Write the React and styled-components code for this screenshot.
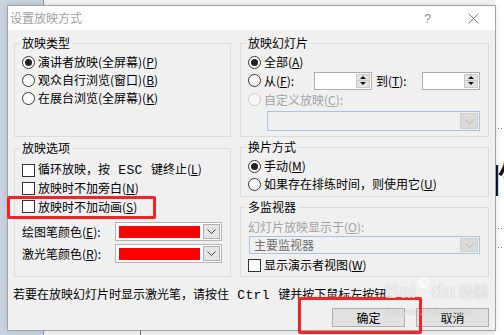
import styled, { createGlobalStyle } from 'styled-components'

const GlobalStyle = createGlobalStyle`
  html, body {
    margin: 0;
    padding: 0;
  }
  body {
    font-family: "Noto Sans CJK SC", "Noto Sans", sans-serif;
    font-size: 12px;
    color: #000;
  }
`

const Chevron = ({ color = '#555' }) => (
  <svg width="9" height="5" viewBox="0 0 9 5">
    <polyline points="0.5,0.5 4.5,4.5 8.5,0.5" fill="none" stroke={color} strokeWidth="1" />
  </svg>
)

const Radio = ({ checked, disabled }) => <RadioMark $checked={checked} $disabled={disabled} />

export default function App() {
  return (
    <>
      <GlobalStyle />
      <Screen>
        <BackGlyph>的</BackGlyph>
        <Dialog>
          <TitleBar>
            <Title>设置放映方式</Title>
            <TitleButtons>
              <HelpMark>?</HelpMark>
              <svg width="11" height="11" viewBox="0 0 11 11">
                <path d="M0.5 0.5 L10.5 10.5 M10.5 0.5 L0.5 10.5" stroke="#777" strokeWidth="1" />
              </svg>
            </TitleButtons>
          </TitleBar>

          <Body>
            <Columns>
              <Column>
                <Group $h={101}>
                  <Legend>放映类型</Legend>
                  <Row>
                    <Radio checked />
                    <Text>演讲者放映(全屏幕)(<u>P</u>)</Text>
                  </Row>
                  <Row>
                    <Radio />
                    <Text>观众自行浏览(窗口)(<u>B</u>)</Text>
                  </Row>
                  <Row>
                    <Radio />
                    <Text>在展台浏览(全屏幕)(<u>K</u>)</Text>
                  </Row>
                </Group>

                <Group $h={136} $pt={6} $gapTop={4}>
                  <Legend>放映选项</Legend>
                  <Row>
                    <CheckMark />
                    <Text>循环放映，按<Mono> ESC </Mono>键终止(<u>L</u>)</Text>
                  </Row>
                  <Row>
                    <CheckMark />
                    <Text>放映时不加旁白(<u>N</u>)</Text>
                  </Row>
                  <Row $h={19}>
                    <CheckMark />
                    <Text>放映时不加动画(<u>S</u>)</Text>
                  </Row>
                  <Row $h={19} $mt={6}>
                    <FieldLabel>绘图笔颜色(<u>E</u>):</FieldLabel>
                    <ColorCombo>
                      <Swatch />
                      <DropButton>
                        <Chevron color="#444" />
                      </DropButton>
                    </ColorCombo>
                  </Row>
                  <Row $h={19} $mt={3}>
                    <FieldLabel>激光笔颜色(<u>R</u>):</FieldLabel>
                    <ColorCombo>
                      <Swatch />
                      <DropButton>
                        <Chevron color="#444" />
                      </DropButton>
                    </ColorCombo>
                  </Row>
                </Group>
              </Column>

              <Column>
                <Group $h={101}>
                  <Legend>放映幻灯片</Legend>
                  <Row>
                    <Radio checked />
                    <Text>全部(<u>A</u>)</Text>
                  </Row>
                  <Row $h={19}>
                    <Lead>
                      <Radio />
                      <Text>从(<u>F</u>):</Text>
                    </Lead>
                    <Spinner>
                      <SpinButtons>
                        <SpinArrow $up />
                        <SpinArrow />
                      </SpinButtons>
                    </Spinner>
                    <ToLabel>到(<u>T</u>):</ToLabel>
                    <Spinner>
                      <SpinButtons>
                        <SpinArrow $up />
                        <SpinArrow />
                      </SpinButtons>
                    </Spinner>
                  </Row>
                  <Row $h={19}>
                    <Radio disabled />
                    <Text $disabled>自定义放映(<u>C</u>):</Text>
                  </Row>
                  <SelectBox $w={213} $h={20} $ml={19} $mt={2}>
                    <SelectValue />
                    <SelectButton>
                      <Chevron color="#b8b8b8" />
                    </SelectButton>
                  </SelectBox>
                </Group>

                <Group $h={57} $gapTop={3}>
                  <Legend>换片方式</Legend>
                  <Row>
                    <Radio checked />
                    <Text>手动(<u>M</u>)</Text>
                  </Row>
                  <Row>
                    <Radio />
                    <Text>如果存在排练时间，则使用它(<u>U</u>)</Text>
                  </Row>
                </Group>

                <Group $h={77} $pt={4} $gapTop={3}>
                  <Legend>多监视器</Legend>
                  <Row $h={17}>
                    <Text $disabled>幻灯片放映显示于(<u>O</u>):</Text>
                  </Row>
                  <SelectBox $w={231} $h={18} $ml={1} $mt={1}>
                    <SelectValue>主要监视器</SelectValue>
                    <SelectButton>
                      <Chevron color="#b8b8b8" />
                    </SelectButton>
                  </SelectBox>
                  <Row $mt={2}>
                    <CheckMark />
                    <Text>显示演示者视图(<u>W</u>)</Text>
                  </Row>
                </Group>
              </Column>
            </Columns>

            <Note>
              若要在放映幻灯片时显示激光笔，请按住<Mono> Ctrl </Mono>键并按下鼠标左按钮。
            </Note>

            <ButtonRow>
              <Button>确定</Button>
              <Button>取消</Button>
            </ButtonRow>
          </Body>
        </Dialog>

        <Highlight $x={7} $y={196} $w={149} $h={23} />
        <Highlight $x={298} $y={297} $w={124} $h={37} />

        <Watermark>
          <Brand>
            Bai
            <Paw viewBox="0 0 16 16" width="14" height="14">
              <ellipse cx="3" cy="7" rx="1.8" ry="2.3" />
              <ellipse cx="6.2" cy="3" rx="1.8" ry="2.3" />
              <ellipse cx="10" cy="3" rx="1.8" ry="2.3" />
              <ellipse cx="13.2" cy="7" rx="1.8" ry="2.3" />
              <path d="M8 7 C5 7 3.5 11 4 13.5 C5 15.5 11 15.5 12 13.5 C12.5 11 11 7 8 7 Z" />
            </Paw>
            du<CnBrand>经验</CnBrand>
          </Brand>
          <Site>jingyan.baidu.com</Site>
        </Watermark>
      </Screen>
    </>
  )
}

const Screen = styled.div`
  position: relative;
  box-sizing: border-box;
  width: 504px;
  height: 335px;
  overflow: hidden;
  padding: 5px 0 0 7px;
  background:
    repeating-linear-gradient(90deg, #666 0 1px, transparent 1px 3px) 495px 128px / 9px 1px no-repeat,
    repeating-linear-gradient(90deg, #666 0 1px, transparent 1px 3px) 495px 228px / 9px 1px no-repeat,
    repeating-linear-gradient(90deg, #666 0 1px, transparent 1px 3px) 495px 247px / 9px 1px no-repeat,
    linear-gradient(#6b6b6b, #6b6b6b) 140px 331px / 1px 4px no-repeat,
    linear-gradient(90deg, #c9d3e0 0 43px, #8f99a6 43px 44px, #f4f4f4 44px 495px, #fff 495px);
`

const BackGlyph = styled.div`
  position: absolute;
  left: 478px;
  top: 152px;
  font-family: "Noto Sans CJK SC", sans-serif;
  font-size: 46px;
  line-height: 48px;
  color: #111;
`

const Dialog = styled.div`
  position: relative;
  box-sizing: border-box;
  width: 489px;
  height: 326px;
  border: 1px solid #a3a3a3;
  background: #f0f0f0;
  box-shadow: 0 0 6px rgba(0, 0, 0, 0.12);
`

const TitleBar = styled.div`
  height: 24px;
  background: #fff;
  display: flex;
  align-items: center;
  justify-content: space-between;
  padding: 0 16px 0 2px;
`

const Title = styled.span`
  color: #a0a0a0;
  font-size: 12px;
  line-height: 14px;
`

const TitleButtons = styled.div`
  display: flex;
  align-items: center;
  gap: 37px;
  padding-top: 1px;
`

const HelpMark = styled.span`
  font-family: "Liberation Sans", sans-serif;
  font-size: 12px;
  color: #8a8a8a;
`

const Body = styled.div`
  padding: 6px 6px 0 6px;
  line-height: 14px;
`

const Columns = styled.div`
  display: grid;
  grid-template-columns: 217px 249px;
  column-gap: 9px;
`

const Column = styled.div`
  display: flex;
  flex-direction: column;
`

const Group = styled.fieldset`
  box-sizing: border-box;
  height: ${p => p.$h}px;
  margin: ${p => p.$gapTop || 0}px 0 0 0;
  padding: ${p => p.$pt ?? 3}px 7px 0 7px;
  border: 1px solid #dcdcdc;
  min-width: 0;
`

const Legend = styled.legend`
  padding: 0 2px;
  margin-left: -2px;
  font-size: 12px;
  line-height: 14px;
`

const Row = styled.div`
  display: flex;
  align-items: center;
  height: ${p => p.$h || 18}px;
  margin-top: ${p => p.$mt || 0}px;
  white-space: nowrap;
`

const RadioMark = styled.span`
  box-sizing: border-box;
  flex: none;
  width: 13px;
  height: 13px;
  margin-right: 3px;
  border-radius: 50%;
  border: 1px solid ${p => (p.$disabled ? '#cacaca' : '#333')};
  background: ${p => (p.$disabled ? '#f7f7f7' : '#fff')};
  display: inline-flex;
  align-items: center;
  justify-content: center;

  &::after {
    content: '';
    display: ${p => (p.$checked ? 'block' : 'none')};
    width: 7px;
    height: 7px;
    border-radius: 50%;
    background: #222;
  }
`

const CheckMark = styled.span`
  box-sizing: border-box;
  flex: none;
  width: 13px;
  height: 13px;
  margin-right: 3px;
  border: 1px solid #333;
  background: #fff;
`

const Text = styled.span`
  color: ${p => (p.$disabled ? '#a3a3a3' : '#000')};
  line-height: 14px;
`

const Mono = styled.span`
  font-family: "Liberation Mono", monospace;
  font-size: 13px;
  letter-spacing: 0.4px;
  white-space: pre;
`

const Lead = styled.span`
  display: flex;
  align-items: center;
  width: 66px;
  flex: none;
`

const Spinner = styled.div`
  box-sizing: border-box;
  width: 58px;
  height: 18px;
  border: 1px solid #acacac;
  background: #fff;
  display: flex;
  justify-content: flex-end;
  padding: 1px;
`

const SpinButtons = styled.div`
  width: 14px;
  display: flex;
  flex-direction: column;
  background: #e3e3e3;
  border: 1px solid #c8c8c8;
  box-sizing: border-box;
`

const SpinArrow = styled.span`
  flex: 1;
  display: flex;
  align-items: center;
  justify-content: center;
  border-top: ${p => (p.$up ? 'none' : '1px solid #c8c8c8')};

  &::before {
    content: '';
    width: 0;
    height: 0;
    border-left: 3px solid transparent;
    border-right: 3px solid transparent;
    ${p => (p.$up ? 'border-bottom: 3px solid #111;' : 'border-top: 3px solid #111;')}
  }
`

const ToLabel = styled.span`
  width: 46px;
  flex: none;
  margin-left: 4px;
`

const FieldLabel = styled.span`
  width: 93px;
  flex: none;
`

const ColorCombo = styled.div`
  box-sizing: border-box;
  width: 107px;
  height: 19px;
  border: 1px solid #b4b4b4;
  background: #fff;
  display: flex;
  align-items: center;
  padding: 0 1px 0 3px;
  gap: 2px;
`

const Swatch = styled.span`
  width: 81px;
  height: 12px;
  background: #ff0000;
`

const DropButton = styled.span`
  box-sizing: border-box;
  width: 17px;
  height: 15px;
  border: 1px solid #adadad;
  background: #e5e5e5;
  display: flex;
  align-items: center;
  justify-content: center;
  margin-left: auto;
`

const SelectBox = styled.div`
  box-sizing: border-box;
  width: ${p => p.$w}px;
  height: ${p => p.$h}px;
  margin: ${p => p.$mt || 0}px 0 0 ${p => p.$ml || 0}px;
  border: 1px solid #a8c4e4;
  background: #f0f0f0;
  display: flex;
  align-items: stretch;
  padding: 1px;
`

const SelectValue = styled.span`
  flex: 1;
  color: #6d6d6d;
  padding-left: 3px;
  display: flex;
  align-items: center;
`

const SelectButton = styled.span`
  width: 16px;
  background: #dadada;
  border: 1px solid #cfcfcf;
  display: flex;
  align-items: center;
  justify-content: center;
`

const Note = styled.div`
  margin: 10px 0 0 -1px;
  white-space: nowrap;
`

const ButtonRow = styled.div`
  display: flex;
  justify-content: flex-end;
  gap: 11px;
  margin-top: 5px;
`

const Button = styled.button`
  box-sizing: border-box;
  width: 73px;
  height: 19px;
  padding: 0;
  border: 1px solid #adadad;
  background: #e1e1e1;
  font-family: inherit;
  font-size: 12px;
  line-height: 14px;
  color: #000;
`

const Highlight = styled.div`
  position: absolute;
  left: ${p => p.$x}px;
  top: ${p => p.$y}px;
  width: ${p => p.$w}px;
  height: ${p => p.$h}px;
  box-sizing: border-box;
  border: 3px solid #f52323;
  border-radius: 2px;
`

const Watermark = styled.div`
  position: absolute;
  left: 385px;
  top: 276px;
  display: flex;
  flex-direction: column;
  align-items: flex-start;
  color: rgba(255, 255, 255, 0.75);
  text-shadow: 0 0 1px rgba(0, 0, 0, 0.28);
  pointer-events: none;
`

const Brand = styled.div`
  display: flex;
  align-items: flex-end;
  font-family: "Liberation Sans", sans-serif;
  font-weight: bold;
  font-size: 20px;
  line-height: 22px;
`

const Paw = styled.svg`
  fill: rgba(255, 255, 255, 0.75);
  margin: 0 0 12px 1px;
`

const CnBrand = styled.span`
  font-family: "Noto Sans CJK SC", sans-serif;
  font-size: 15px;
  margin-left: 3px;
`

const Site = styled.div`
  font-family: "Liberation Sans", sans-serif;
  font-size: 11px;
  line-height: 13px;
  margin-top: 3px;
`
